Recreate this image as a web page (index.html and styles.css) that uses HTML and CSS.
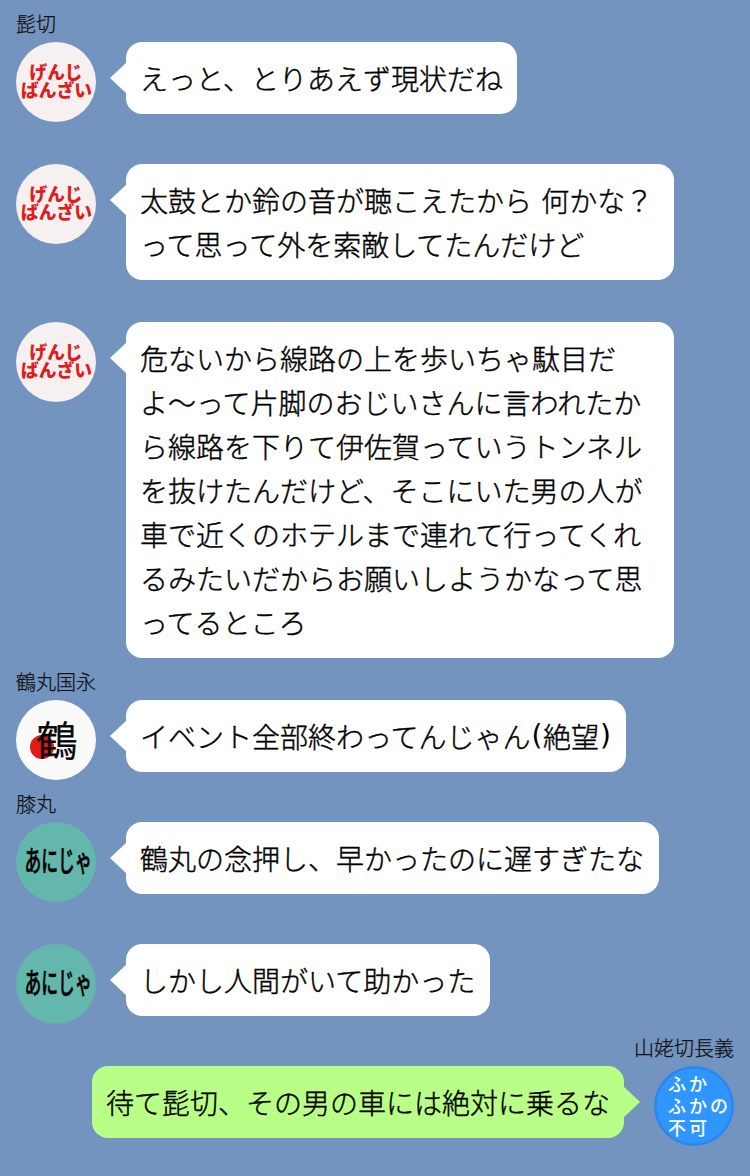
FILE: index.html
```html
<!DOCTYPE html>
<html lang="ja">
<head>
<meta charset="utf-8">
<title>チャット</title>
<link rel="stylesheet" href="styles.css">
</head>
<body>
<main class="chat">
  <section class="message">
    <div class="name">髭切</div>
    <div class="row">
      <div class="avatar genji"><svg viewBox="0 0 80 80"><text x="13.5" y="37" textLength="53" lengthAdjust="spacingAndGlyphs">げんじ</text><text x="5" y="54.5" textLength="71" lengthAdjust="spacingAndGlyphs">ばんざい</text></svg></div>
      <p class="bubble">えっと、とりあえず現状だね</p>
    </div>
  </section>
  <section class="message">
    <div class="name"></div>
    <div class="row">
      <div class="avatar genji"><svg viewBox="0 0 80 80"><text x="13.5" y="37" textLength="53" lengthAdjust="spacingAndGlyphs">げんじ</text><text x="5" y="54.5" textLength="71" lengthAdjust="spacingAndGlyphs">ばんざい</text></svg></div>
      <p class="bubble wide">太鼓とか鈴の音が聴こえたから 何かな？<br>って思って外を索敵してたんだけど</p>
    </div>
  </section>
  <section class="message">
    <div class="name"></div>
    <div class="row">
      <div class="avatar genji"><svg viewBox="0 0 80 80"><text x="13.5" y="37" textLength="53" lengthAdjust="spacingAndGlyphs">げんじ</text><text x="5" y="54.5" textLength="71" lengthAdjust="spacingAndGlyphs">ばんざい</text></svg></div>
      <p class="bubble wide">危ないから線路の上を歩いちゃ駄目だ<br>よ〜って片脚のおじいさんに言われたか<br>ら線路を下りて伊佐賀っていうトンネル<br>を抜けたんだけど、そこにいた男の人が<br>車で近くのホテルまで連れて行ってくれ<br>るみたいだからお願いしようかなって思<br>ってるところ</p>
    </div>
  </section>
  <section class="message">
    <div class="name">鶴丸国永</div>
    <div class="row">
      <div class="avatar tsuru"><svg viewBox="0 0 80 80"><circle cx="26" cy="47" r="12"/><text x="20.5" y="56">鶴</text></svg></div>
      <p class="bubble">イベント全部終わってんじゃん<span class="paren">(</span>絶望<span class="paren">)</span></p>
    </div>
  </section>
  <section class="message">
    <div class="name">膝丸</div>
    <div class="row">
      <div class="avatar anija"><svg viewBox="0 0 80 80"><text transform="translate(8.5 50) scale(.58 1)">あにじゃ</text></svg></div>
      <p class="bubble">鶴丸の念押し、早かったのに遅すぎたな</p>
    </div>
  </section>
  <section class="message">
    <div class="name"></div>
    <div class="row">
      <div class="avatar anija"><svg viewBox="0 0 80 80"><text transform="translate(8.5 50) scale(.58 1)">あにじゃ</text></svg></div>
      <p class="bubble">しかし人間がいて助かった</p>
    </div>
  </section>
  <section class="message own">
    <div class="name">山姥切長義</div>
    <div class="row">
      <div class="avatar fuka"><svg viewBox="0 0 80 80"><circle cx="40" cy="40" r="37.5"/><text x="14" y="25">ふか</text><text x="14" y="47">ふかの</text><text x="14" y="69">不可</text></svg></div>
      <p class="bubble">待て髭切、その男の車には絶対に乗るな</p>
    </div>
  </section>
</main>
</body>
</html>
```
FILE: styles.css
```css
* { box-sizing: border-box; }
body {
  margin: 0;
  background: #7494c0;
  color: #111;
  font-family: "Noto Sans CJK JP", sans-serif;
  font-weight: 300;
}
.chat { width: 750px; height: 1176px; padding: 0 16px; overflow: hidden; }
.name {
  height: 42px;
  padding-top: 9px;
  font-size: 20px;
  line-height: 30px;
  -webkit-text-stroke: 0.25px #111;
}
.row { display: flex; align-items: flex-start; gap: 30px; }
.avatar {
  flex: none;
  width: 80px;
  height: 80px;
  border-radius: 50%;
}
.avatar svg { display: block; width: 80px; height: 80px; overflow: visible; }
.genji { background: #f6f0f1; }
.genji text { fill: #df1d20; font-size: 18px; font-weight: 800; }
.tsuru { background: #fafafa; }
.tsuru circle { fill: #df1a17; }
.tsuru text { font-size: 41px; font-weight: 300; stroke: #000; stroke-width: 0.8px; }
.anija { background: #63b7ad; }
.anija text { font-size: 29px; font-weight: 500; stroke: #000; stroke-width: 0.5px; }
.fuka { background: #2d86ec; }
.fuka circle { fill: #3096ff; }
.fuka text { fill: #fff; font-size: 18px; font-weight: 500; letter-spacing: 3px; }
.bubble {
  position: relative;
  margin: 0;
  padding: 14px 14.5px 14px 14px;
  border-radius: 16px;
  background: #fff;
  color: #000;
  font-size: 28px;
  line-height: 44px;
  white-space: nowrap;
  word-spacing: 3px;
  -webkit-text-stroke: 0.4px #000;
}
.wide { width: 548px; }
.bubble::before {
  content: "";
  position: absolute;
  top: 20px;
  left: -16px;
  width: 17px;
  height: 32px;
  background: inherit;
  clip-path: polygon(0 50%, 100% 0, 100% 100%);
}
.paren {
  display: inline-block;
  width: 12.5px;
  height: 44px;
  vertical-align: top;
  text-align: center;
  font-family: "DejaVu Sans", sans-serif;
  font-weight: 400;
  -webkit-text-stroke: 0;
}
.own .name { text-align: right; }
.own .row { flex-direction: row-reverse; }
.own .bubble { padding-right: 14px; background: #b9ff87; }
.own .bubble::before {
  left: auto;
  right: -16px;
  clip-path: polygon(100% 50%, 0 0, 0 100%);
}
```
